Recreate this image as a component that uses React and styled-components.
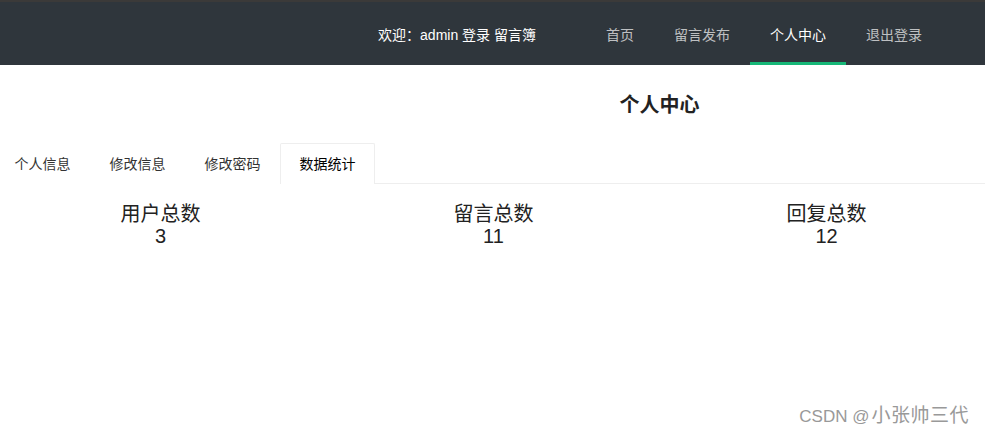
import React from "react";
import styled, { createGlobalStyle } from "styled-components";

const Global = createGlobalStyle`
  html, body { margin: 0; padding: 0; background: #fff; }
  body {
    font-family: "Liberation Sans", Arial, "Noto Sans CJK SC", sans-serif;
    font-size: 14px;
    color: #333;
    overflow: hidden;
  }
  ul { margin: 0; padding: 0; list-style: none; }
`;

const Page = styled.div`
  position: relative;
  width: 985px;
  height: 436px;
  overflow: hidden;
`;

const Header = styled.header`
  height: 63px;
  border-top: 2px solid #3b3a39;
  background: #2f363c;
  display: flex;
  align-items: stretch;
  justify-content: flex-end;
  padding-right: 43px;
`;

const Welcome = styled.div`
  color: #fff;
  display: flex;
  align-items: center;
  margin-right: 50px;
  padding-top: 1px;
`;

const Nav = styled.ul`
  display: flex;
  align-items: stretch;
`;

const NavItem = styled.li`
  position: relative;
  padding: 0 20px;
  display: flex;
  align-items: center;
  padding-top: 1px;
  color: ${(p) => (p.$active ? "#fff" : "rgba(255,255,255,0.7)")};
  &::after {
    content: "";
    position: absolute;
    left: 0;
    right: 0;
    bottom: 0;
    height: 3px;
    background: ${(p) => (p.$active ? "#16b777" : "transparent")};
  }
`;

const Title = styled.h2`
  margin: 0;
  padding: 25px 0 0 334px;
  line-height: 30px;
  height: 30px;
  text-align: center;
  font-size: 20px;
  font-weight: bold;
  color: #222;
`;

const Tabs = styled.ul`
  margin-top: 23px;
  margin-left: -5px;
  display: flex;
  height: 40px;
  border-bottom: 1px solid #eee;
`;

const Tab = styled.li`
  box-sizing: border-box;
  height: 41px;
  line-height: 40px;
  padding: 0 18.5px;
  margin-bottom: -1px;
  border: 1px solid ${(p) => (p.$active ? "#eee" : "transparent")};
  border-bottom: none;
  border-radius: 2px 2px 0 0;
  background: #fff;
  color: ${(p) => (p.$active ? "#000" : "#333")};
`;

const Stats = styled.div`
  display: grid;
  grid-template-columns: repeat(3, 333px);
  margin: 19px 0 0 -6px;
`;

const Stat = styled.div`
  text-align: center;
  font-size: 20px;
  line-height: 22px;
  color: #222;
`;

const Watermark = styled.div`
  position: absolute;
  right: 16px;
  bottom: 9px;
  display: flex;
  align-items: baseline;
  color: #999;
`;

const MarkLatin = styled.span`
  font-size: 17px;
  margin-right: 2px;
`;

const MarkCjk = styled.span`
  font-size: 19px;
  letter-spacing: 0.5px;
`;

export default function App() {
  const navs = ["首页", "留言发布", "个人中心", "退出登录"];
  const tabs = ["个人信息", "修改信息", "修改密码", "数据统计"];
  const stats = [
    ["用户总数", 3],
    ["留言总数", 11],
    ["回复总数", 12],
  ];
  return (
    <Page>
      <Global />
      <Header>
        <Welcome>欢迎：admin 登录 留言簿</Welcome>
        <Nav>
          {navs.map((n) => (
            <NavItem key={n} $active={n === "个人中心"}>
              {n}
            </NavItem>
          ))}
        </Nav>
      </Header>
      <Title>个人中心</Title>
      <Tabs>
        {tabs.map((t) => (
          <Tab key={t} $active={t === "数据统计"}>
            {t}
          </Tab>
        ))}
      </Tabs>
      <Stats>
        {stats.map(([label, n]) => (
          <Stat key={label}>
            <div>{label}</div>
            <div>{n}</div>
          </Stat>
        ))}
      </Stats>
      <Watermark>
        <MarkLatin>CSDN @</MarkLatin>
        <MarkCjk>小张帅三代</MarkCjk>
      </Watermark>
    </Page>
  );
}
